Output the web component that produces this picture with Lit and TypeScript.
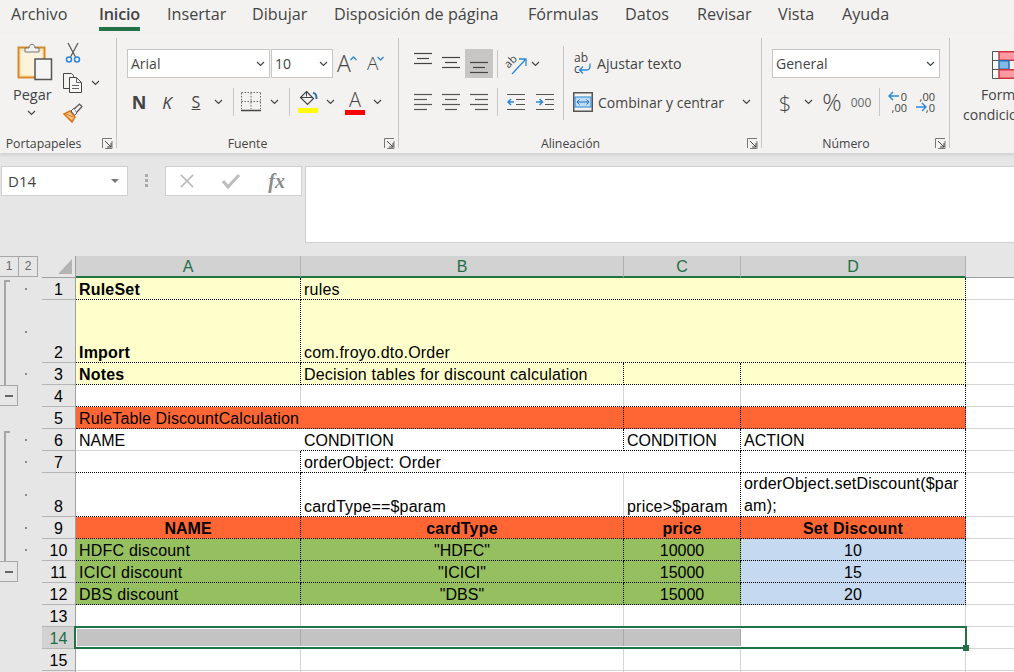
import { LitElement, html, css, svg } from 'lit';
import { customElement } from 'lit/decorators.js';

type Cell = { col: number; span?: number; text?: unknown; cls?: string };

const chev = html`<svg class="chev" width="9" height="6" viewBox="0 0 9 6"><path d="M1 1l3.5 3.5L8 1" fill="none" stroke="#444" stroke-width="1.2"/></svg>`;

const launcher = html`<svg class="launcher" width="11" height="11" viewBox="0 0 11 11"><path d="M.5 10V.5H10M10 3v7.5H3" fill="none" stroke="#777"/><path d="M3 3l6 6M9 5v4H5" fill="none" stroke="#444"/></svg>`;

const clipboard = html`<svg width="36" height="38" viewBox="0 0 36 38">
  <rect x="1.5" y="4.5" width="26" height="30" fill="#fbe3b2" stroke="#d68a2e" stroke-width="2"/>
  <rect x="4" y="8" width="21" height="24" fill="#fdf3dc"/>
  <path d="M8 9V5h4c0-5 6-5 6 0h4v4z" fill="#f3f2f1" stroke="#777"/>
  <rect x="18" y="16" width="16.500" height="20.500" fill="#f5f5f5" stroke="#555" stroke-width="1.500"/>
</svg>`;

const scissors = html`<svg width="20" height="20" viewBox="0 0 20 20">
  <path d="M5 0l7.500 14M15 0L7.500 14" fill="none" stroke="#555" stroke-width="1.200"/>
  <circle cx="6" cy="16.500" r="2.500" fill="none" stroke="#2b88d8" stroke-width="1.500"/>
  <circle cx="14" cy="16.500" r="2.500" fill="none" stroke="#2b88d8" stroke-width="1.500"/>
</svg>`;

const copy = html`<svg width="20" height="20" viewBox="0 0 20 20">
  <path d="M6 15.500H.5V.5h8l2 2v2" fill="#f3f2f1" stroke="#444"/>
  <path d="M6.500 4.500h7l5 5v10h-12z" fill="#f8f8f8" stroke="#444"/>
  <path d="M13.500 4.500v5h5M9 12.500h7M9 15.500h7" fill="none" stroke="#666"/>
</svg>`;

const brush = html`<svg width="20" height="20" viewBox="0 0 20 20">
  <path d="M1 11l6-3 5 6-3 5z" fill="#f8c67e" stroke="#d9791f" stroke-width="1.500"/>
  <path d="M4 14l5 4M3 11l7 3" stroke="#d9791f" fill="none"/>
  <path d="M8 8l3-3 3 5-2.500 2.500z" fill="#f3f2f1" stroke="#555"/>
  <path d="M11 6l5.500-5 2.500 2.500L14 9" fill="#f3f2f1" stroke="#555" stroke-width="1.200"/>
</svg>`;

const caret = (up: boolean) => html`<svg class="caret" width="7" height="5" viewBox="0 0 7 5"><path d=${up ? 'M.5 4l3-3 3 3' : 'M.5 1l3 3 3-3'} fill="none" stroke="#2b88d8" stroke-width="1.300"/></svg>`;

const borders = html`<svg width="20" height="22" viewBox="0 0 20 22">
  <path d="M.5 2v16M19.500 2v16M.5 1.500h19M.5 10.500h19M10 2v16" fill="none" stroke="#666" stroke-dasharray="1.500 1.500"/>
  <path d="M0 19.500h20" stroke="#444" stroke-width="1.500"/>
</svg>`;

const bucket = html`<svg width="20" height="24" viewBox="0 0 20 24">
  <path d="M8.500 1.500l7 7-6 6-7-7z" fill="#f3f2f1" stroke="#444" stroke-width="1.200"/>
  <path d="M2.500 7.500h12" stroke="#444"/>
  <path d="M8.500 1.500v5" stroke="#444"/>
  <path d="M15 3c3 0 3.500 2 3.500 6" fill="none" stroke="#2b6cb0" stroke-width="2"/>
  <rect y="18" width="20" height="5" fill="#ffff00"/>
</svg>`;

const lines = (ys: number[], insets: [number, number][], h: number, color = '#444') => html`<svg width="18" height=${h} viewBox="0 0 18 ${h}">
  ${ys.map((y, i) => svg`<path d="M${insets[i][0]} ${y}.5H${insets[i][1]}" stroke=${color} stroke-width="1.200"/>`)}
</svg>`;

const v3: [number, number][] = [[0, 18], [3, 15], [0, 18]];
const alignTop = lines([4, 9, 14], v3, 29);
const alignMid = lines([8, 13, 18], v3, 29);
const alignBot = lines([13, 18, 23], v3, 29);
const ys4 = [6, 11, 16, 21];
const alignL = lines(ys4, [[0, 18], [0, 13], [0, 18], [0, 13]], 28, '#555');
const alignC = lines(ys4, [[0, 18], [3, 15], [0, 18], [3, 15]], 28, '#555');
const alignR = lines(ys4, [[0, 18], [5, 18], [0, 18], [5, 18]], 28, '#555');

const indentOut = html`<svg width="18" height="28" viewBox="0 0 18 28">
  <path d="M0 6.500h18M9 11.500h9M9 16.500h9M0 21.500h18" stroke="#555" stroke-width="1.200"/>
  <path d="M7 14H1M4 11l-3 3 3 3" fill="none" stroke="#2b88d8" stroke-width="1.500"/>
</svg>`;
const indentIn = html`<svg width="18" height="28" viewBox="0 0 18 28">
  <path d="M0 6.500h18M9 11.500h9M9 16.500h9M0 21.500h18" stroke="#555" stroke-width="1.200"/>
  <path d="M0 14h6M3.500 11l3 3-3 3" fill="none" stroke="#2b88d8" stroke-width="1.500"/>
</svg>`;

const orient = html`<svg width="22" height="24" viewBox="0 0 22 24">
  <text x="0" y="14" font-family="Open Sans" font-size="11" fill="#444" transform="rotate(-45 5 11)">ab</text>
  <path d="M7 22L20 8M14 7h7v7" fill="none" stroke="#2b88d8" stroke-width="1.300"/>
</svg>`;

const wrapIcon = html`<svg width="18" height="22" viewBox="0 0 18 22">
  <text x="1" y="9" font-family="Open Sans" font-size="12" fill="#444">ab</text>
  <text x="1" y="20" font-family="Open Sans" font-size="12" fill="#444">c</text>
  <path d="M17 10.500v3c0 3-2 3.500-4 3.500H7M10 13.500L6.500 17l3.500 3.500" fill="none" stroke="#2b88d8" stroke-width="1.300"/>
</svg>`;

const mergeIcon = html`<svg width="20" height="20" viewBox="0 0 20 20">
  <rect x=".75" y=".75" width="18.500" height="18.500" fill="#f3f2f1" stroke="#555" stroke-width="1.500"/>
  <rect x="2" y="5" width="16" height="10" fill="#bcdcf5" stroke="#2b88d8"/>
  <path d="M4 10h12M6.500 7.500L4 10l2.500 2.500M13.500 7.500L16 10l-2.500 2.500" fill="none" stroke="#2b6cb0"/>
</svg>`;

const decIcon = (more: boolean) => html`<svg width="20" height="24" viewBox="0 0 20 24">
  ${more
    ? svg`<text x="20" y="11" text-anchor="end" class="dectxt">0</text><text x="20" y="22" text-anchor="end" class="dectxt">,00</text>
          <path d="M12 6H2M6 2L2 6l4 4" fill="none" stroke="#2b88d8" stroke-width="1.400"/>`
    : svg`<text x="20" y="11" text-anchor="end" class="dectxt">,00</text><text x="20" y="22" text-anchor="end" class="dectxt">,0</text>
          <path d="M1 17h10M7 13l4 4-4 4" fill="none" stroke="#2b88d8" stroke-width="1.400"/>`}
</svg>`;

const condIcon = html`<svg width="26" height="28" viewBox="0 0 26 28">
  <path d="M.5.5h7v27h-7zM.5 9.500h7M.5 18.500h7" fill="#fff" stroke="#555"/>
  <rect x="7" y=".75" width="19" height="8.500" fill="#ff9aa2" stroke="#d13438" stroke-width="1.500"/>
  <rect x="7" y="9.750" width="10" height="8.500" fill="#83b9e8" stroke="#2b6cb0" stroke-width="1.500"/>
  <rect x="7" y="18.750" width="19" height="8.500" fill="#ff9aa2" stroke="#d13438" stroke-width="1.500"/>
</svg>`;

const tabs = ['Archivo', 'Inicio', 'Insertar', 'Dibujar', 'Disposición de página', 'Fórmulas', 'Datos', 'Revisar', 'Vista', 'Ayuda'];

const Y = 'yellow dr db';
const O = 'orange dr db';
const OH = 'orange dr db bold center';
const G = 'green dr db';
const GC = 'green dr db center';
const BC = 'blue dr db center';

const data: Cell[][] = [
  [{ col: 0, text: 'RuleSet', cls: `${Y} bold` }, { col: 1, span: 3, text: 'rules', cls: Y }],
  [{ col: 0, text: 'Import', cls: `${Y} bold` }, { col: 1, span: 3, text: 'com.froyo.dto.Order', cls: Y }],
  [{ col: 0, text: 'Notes', cls: `${Y} bold` }, { col: 1, text: 'Decision tables for discount calculation', cls: Y }, { col: 2, cls: Y }, { col: 3, cls: Y }],
  [{ col: 0, cls: 'db' }, { col: 1, cls: 'db' }, { col: 2, cls: 'db' }, { col: 3, cls: 'dr db' }],
  [{ col: 0, span: 2, text: 'RuleTable DiscountCalculation', cls: `${O} mid` }, { col: 2, cls: O }, { col: 3, cls: O }],
  [{ col: 0, text: 'NAME', cls: 'nr caps' }, { col: 1, text: 'CONDITION', cls: 'dr db caps' }, { col: 2, text: 'CONDITION', cls: 'dr db caps' }, { col: 3, text: 'ACTION', cls: 'dr db caps' }],
  [{ col: 0, cls: 'dr db' }, { col: 1, span: 2, text: 'orderObject: Order', cls: 'dr db' }, { col: 3, cls: 'dr db' }],
  [
    { col: 0, cls: 'dr db' },
    { col: 1, text: 'cardType==$param', cls: 'db' },
    { col: 2, text: 'price>$param', cls: 'dr db' },
    { col: 3, text: html`<span>orderObject.setDiscount($par<br />am);</span>`, cls: 'dr db wrap' },
  ],
  [{ col: 0, text: 'NAME', cls: `${OH} caps` }, { col: 1, text: 'cardType', cls: OH }, { col: 2, text: 'price', cls: OH }, { col: 3, text: 'Set Discount', cls: OH }],
  [{ col: 0, text: 'HDFC discount', cls: G }, { col: 1, text: '"HDFC"', cls: `${GC} caps` }, { col: 2, text: '10000', cls: `${GC} caps` }, { col: 3, text: '10', cls: `${BC} caps` }],
  [{ col: 0, text: 'ICICI discount', cls: G }, { col: 1, text: '"ICICI"', cls: `${GC} caps` }, { col: 2, text: '15000', cls: `${GC} caps` }, { col: 3, text: '15', cls: `${BC} caps` }],
  [{ col: 0, text: 'DBS discount', cls: G }, { col: 1, text: '"DBS"', cls: `${GC} caps` }, { col: 2, text: '15000', cls: `${GC} caps` }, { col: 3, text: '20', cls: `${BC} caps` }],
  [{ col: 0 }, { col: 1 }, { col: 2 }, { col: 3 }],
  [{ col: 0, cls: 'sel' }, { col: 1, cls: 'sel' }, { col: 2, cls: 'sel' }, { col: 3 }],
  [{ col: 0 }, { col: 1 }, { col: 2 }, { col: 3 }],
  [{ col: 0 }, { col: 1 }, { col: 2 }, { col: 3 }],
];

const dotted = [1, 2, 3, 6, 7, 8, 9, 10];

@customElement('app-root')
export class AppRoot extends LitElement {
  static styles = css`
    :host {
      display: block;
      width: 1014px;
      height: 672px;
      overflow: hidden;
      background: #e6e6e6;
      font-family: 'Open Sans', sans-serif;
      color: #444;
    }
    svg { display: block; flex: none; overflow: visible; }
    .dectxt { font: 11px 'Open Sans', sans-serif; fill: #444; }

    .tabs {
      display: grid;
      grid-template-columns: 88px 68px 85px 82px 194px 97px 72px 81px 64px 100px;
      height: 33px;
      padding-left: 11px;
      box-sizing: border-box;
      background: #f3f2f1;
      font-size: 16.200px;
    }
    .tab { height: 27px; line-height: 29px; white-space: nowrap; }
    .tab.on span { display: inline-block; height: 27px; border-bottom: 4px solid #217346; font-weight: 600; letter-spacing: -.2px; }

    .ribbon {
      display: flex;
      height: 120px;
      background: #f3f2f1;
      box-shadow: 0 2px 3px #cfcfcf;
      position: relative;
      padding: 5px 0;
      box-sizing: border-box;
      font-size: 14px;
    }
    .group {
      display: flex;
      flex-direction: column;
      position: relative;
      box-sizing: border-box;
      height: 110px;
      border-right: 1px solid #c8c6c4;
      flex: none;
    }
    .g1 { width: 117px; }
    .g2 { width: 282px; padding: 11px 0 0 9px; }
    .g3 { width: 363px; padding: 11px 0 0 10px; }
    .g4 { width: 188px; padding: 11px 0 0 10px; }
    .g5 { border: 0; width: 120px; padding: 9px 0 0 13px; line-height: 20px; }
    .label {
      margin-top: auto;
      margin-bottom: -6px;
      padding-right: 29px;
      height: 20px;
      line-height: 20px;
      font-size: 12.300px;
      text-align: center;
    }
    .launcher { position: absolute; right: 3px; bottom: -1px; }

    .paste-body { display: flex; padding: 5px 0 0 13px; }
    .paste { display: flex; flex-direction: column; width: 47px; font-size: 14.500px; }
    .paste svg:first-child { margin-left: 4px; }
    .paste span { margin-top: 4px; line-height: 20px; }
    .paste .chev { margin: 5px 0 0 14px; }
    .clip-tools { display: flex; flex-direction: column; gap: 10px; margin-left: 3px; }
    .clip-tools div { display: flex; align-items: center; gap: 8px; height: 20px; }

    .sel-box {
      display: flex;
      align-items: center;
      justify-content: space-between;
      height: 29px;
      box-sizing: border-box;
      padding: 0 4px 0 3px;
      background: #fff;
      border: 1px solid #c8c6c4;
      font-size: 14px;
    }
    .r1 { display: flex; align-items: center; height: 29px; }
    .font-name { width: 143px; margin-left: 1px; }
    .font-size { width: 62px; margin-left: 1px; }
    .grow { display: flex; align-items: flex-start; width: 30px; font-size: 23px; font-weight: 300; line-height: 29px; margin-left: 4px; }
    .grow.small { font-size: 19px; margin-left: 0; }
    .caret { margin-top: 7px; margin-left: -1px; }

    .ir {
      display: grid;
      align-items: center;
      justify-items: center;
      height: 28px;
      margin-top: 10px;
    }
    .i1 { margin-top: 0; height: 29px; }
    .font2 { grid-template-columns: 28px 28px 30px 14px 16px 20px 26px 4px 34px 10px 40px 4px; margin-left: -1px; }
    .n { font: 700 18px 'Open Sans', sans-serif; }
    .k { font: italic 400 17px 'Open Sans', sans-serif; }
    .s { font-size: 16px; text-decoration: underline; }
    .vs { width: 1px; height: 28px; background: #c8c6c4; }
    .acolor { display: flex; flex-direction: column; align-items: center; width: 20px; font-size: 20px; font-weight: 300; line-height: 20px; }
    .acolor i { display: block; width: 20px; height: 5px; background: #ff0000; }

    .align-body { display: flex; }
    .align-left { width: 154px; }
    .al1, .al2 { grid-template-columns: 28px 28px 28px 8px 30px 8px; }
    .al2 { grid-template-columns: 28px 28px 28px 8px 30px 28px; }
    .picked { display: flex; justify-content: center; width: 28px; height: 29px; background: #c8c6c4; }
    .big-sep { width: 1px; height: 74px; margin-top: -3px; background: #c8c6c4; }
    .align-right { padding-left: 9px; }
    .aj { display: flex; align-items: center; gap: 6px; height: 29px; font-size: 14.200px; }
    .aj + .aj { height: 28px; margin-top: 10px; gap: 5px; font-size: 14px; }
    .aj .chev { margin-left: 13px; }

    .num-sel { width: 168px; }
    .num2 { grid-template-columns: 26px 20px 28px 30px 6px 30px 26px; }
    .dollar { font-size: 22px; font-weight: 300; line-height: 28px; }
    .pct { font-size: 24px; font-weight: 300; line-height: 28px; }
    .mil { font-size: 12px; color: #666; }

    .g5 svg { margin: 4px 0 6px 29px; }
    .g5 div { white-space: nowrap; font-size: 14px; }
    .g5 .first { padding-left: 18px; }

    .formula {
      display: flex;
      height: 103px;
      box-sizing: border-box;
      padding: 13px 0 0 1px;
      background: #e6e6e6;
    }
    .namebox, .fbtns, .finput { box-sizing: border-box; background: #fff; border: 1px solid #d0d0d0; flex: none; }
    .namebox {
      display: flex;
      align-items: center;
      justify-content: space-between;
      width: 127px;
      height: 30px;
      padding: 0 8px 0 6px;
      font-size: 15px;
    }
    .tri { width: 0; height: 0; border: 4px solid transparent; border-top: 4px solid #777; border-bottom: 0; }
    .grip { display: flex; flex: none; flex-direction: column; gap: 2px; width: 37px; align-items: center; padding-top: 8px; box-sizing: border-box; }
    .grip i { display: block; width: 3px; height: 3px; background: #aaa; }
    .fbtns { display: flex; align-items: center; justify-content: space-around; width: 137px; height: 30px; padding: 0 2px 0 0; }
    .fx { font: italic 700 20px 'Liberation Serif', serif; color: #8c8c8c; }
    .finput { width: 720px; height: 77px; margin-left: 3px; }

    .sheet {
      display: grid;
      grid-template-columns: 18px 24px 34px 225px 323px 117px 225px 60px;
      grid-template-rows: 22px 22px 63px 22px 22px 22px 22px 22px 44px 22px 22px 22px 22px 22px 22px 22px 22px;
      background: #fff;
      font: 16px 'Liberation Sans', Arial, sans-serif;
      color: #000;
    }
    .gut { background: #e6e6e6; grid-column: 1 / 3; }
    .outline-btns { display: flex; grid-column: 1 / 3; grid-row: 1; background: #e6e6e6; }
    .outline-btns span {
      box-sizing: border-box;
      width: 19px;
      height: 21px;
      border: 1px solid #a6a6a6;
      border-left-width: 0;
      text-align: center;
      font-size: 12px;
      line-height: 19px;
      color: #666;
    }
    .outline-btns span + span { width: 20px; border-left-width: 1px; margin-left: -1px; }
    .corner { grid-column: 3; grid-row: 1; background: #e6e6e6; border-right: 1px solid #a0a0a0; border-bottom: 1px solid #a0a0a0; display: flex; justify-content: flex-end; box-sizing: border-box; padding: 3px 3px 0 0; }
    .colh {
      box-sizing: border-box;
      background: #d2d2d2;
      border-right: 1px solid #b0b0b0;
      border-bottom: 2px solid #217346;
      color: #1f6e43;
      text-align: center;
      line-height: 21px;
      font-size: 16px;
    }
    .colh-rest { background: #e6e6e6; border-bottom: 1px solid #a0a0a0; box-sizing: border-box; }
    .rowh {
      box-sizing: border-box;
      grid-column: 3;
      background: #e6e6e6;
      border-right: 1px solid #a0a0a0;
      border-bottom: 1px solid #b5b5b5;
      display: flex;
      align-items: flex-end;
      justify-content: center;
      line-height: 19px;
    }
    .rowh.cur { background: #d2d2d2; color: #1f6e43; }
    .dot { display: flex; align-items: center; grid-column: 2; padding-left: 7px; box-sizing: border-box; pointer-events: none; }
    .dot i { display: block; width: 2px; height: 2px; background: #8a8a8a; }
    .bar {
      grid-column: 1;
      box-sizing: border-box;
      margin: 2px 0 0 4px;
      width: 6px;
      border-left: 2px solid #a6a6a6;
      border-top: 2px solid #a6a6a6;
    }
    .minus {
      grid-column: 1;
      box-sizing: border-box;
      width: 18px;
      height: 21px;
      background: #e6e6e6;
      border: 1px solid #a6a6a6;
      border-left: 0;
      display: flex;
      align-items: center;
      justify-content: center;
    }
    .minus i { display: block; width: 8px; height: 2px; background: #666; }

    .cell {
      box-sizing: border-box;
      display: flex;
      align-items: flex-end;
      padding-left: 3px;
      white-space: nowrap;
      line-height: 19px;
      letter-spacing: .2px;
      border-right: 1px solid #d4d4d4;
      border-bottom: 1px solid #d4d4d4;
      background: #fff;
    }
    .caps { letter-spacing: 0; }
    .mid { letter-spacing: .1px; }
    .dr { border-right: 1px dotted #000; }
    .db { border-bottom: 1px dotted #000; }
    .nr { border-right-color: transparent; }
    .bold { font-weight: 700; }
    .center { justify-content: center; padding-left: 0; }
    .wrap { line-height: 22px; align-items: flex-start; }
    .yellow { background: #ffffcc; }
    .orange { background: #ff6633; }
    .green { background: #96bf5f; }
    .blue { background: #c5d9f1; }
    .sel { background: #c3c3c3; border-right-color: #a8a8a8; border-bottom-color: #c3c3c3; }

    .selection {
      grid-column: 4 / 8;
      grid-row: 15;
      box-sizing: border-box;
      position: relative;
      margin: -1px -1px 0 -2px;
      border: 2px solid #217346;
      box-shadow: inset 0 0 0 1px #fff;
      pointer-events: none;
    }
    .handle {
      position: absolute;
      right: -4px;
      bottom: -4px;
      width: 6px;
      height: 6px;
      background: #217346;
    }
  `;

  renderCell(row: number, c: Cell) {
    const span = c.span ?? 1;
    return html`<div class="cell ${c.cls ?? ''}" style="grid-area: ${row + 1} / ${c.col + 4} / ${row + 2} / ${c.col + 4 + span}">${c.text ?? ''}</div>`;
  }

  renderSheet() {
    return html`
      <div class="sheet">
        <div class="gut" style="grid-row: 2 / 18"></div>
        <div class="outline-btns"><span>1</span><span>2</span></div>
        <div class="corner"><svg width="14" height="15" viewBox="0 0 14 15"><path d="M14 0v15H0z" fill="#b4b4b4"/></svg></div>
        ${['A', 'B', 'C', 'D'].map((l) => html`<div class="colh">${l}</div>`)}
        <div class="colh-rest"></div>

        <div class="bar" style="grid-row: 2 / 5"></div>
        <div class="minus" style="grid-row: 5"><i></i></div>
        <div class="bar" style="grid-row: 7 / 12"></div>
        <div class="minus" style="grid-row: 12"><i></i></div>
        ${dotted.map((n) => html`<div class="dot" style="grid-row: ${n + 1}"><i></i></div>`)}

        ${data.map((cells, i) => {
          const row = i + 1;
          return html`
            <div class="rowh ${row === 14 ? 'cur' : ''}" style="grid-row: ${row + 1}">${row}</div>
            ${cells.map((c) => this.renderCell(row, c))}
            ${this.renderCell(row, { col: 4, cls: 'nr' })}
          `;
        })}

        <div class="selection"><div class="handle"></div></div>
      </div>
    `;
  }

  render() {
    return html`
      <div class="tabs">
        ${tabs.map((t) => html`<div class="tab ${t === 'Inicio' ? 'on' : ''}"><span>${t}</span></div>`)}
      </div>

      <div class="ribbon">
        <div class="group g1">
          <div class="paste-body">
            <div class="paste">${clipboard}<span>Pegar</span>${chev}</div>
            <div class="clip-tools">
              <div>${scissors}</div>
              <div>${copy}${chev}</div>
              <div>${brush}</div>
            </div>
          </div>
          <div class="label">Portapapeles</div>
          ${launcher}
        </div>

        <div class="group g2">
          <div class="r1">
            <div class="sel-box font-name">Arial ${chev}</div>
            <div class="sel-box font-size">10 ${chev}</div>
            <div class="grow">A${caret(true)}</div>
            <div class="grow small">A${caret(false)}</div>
          </div>
          <div class="ir font2">
            <span class="n">N</span>
            <span class="k">K</span>
            <span class="s">S</span>
            ${chev}
            <div class="vs"></div>
            ${borders}
            ${chev}
            <div class="vs"></div>
            ${bucket}
            ${chev}
            <div class="acolor">A<i></i></div>
            ${chev}
          </div>
          <div class="label">Fuente</div>
          ${launcher}
        </div>

        <div class="group g3">
          <div class="align-body">
            <div class="align-left">
              <div class="ir i1 al1">
                ${alignTop}
                ${alignMid}
                <div class="picked">${alignBot}</div>
                <div class="vs"></div>
                ${orient}
                ${chev}
              </div>
              <div class="ir al2">
                ${alignL}
                ${alignC}
                ${alignR}
                <div class="vs"></div>
                ${indentOut}
                ${indentIn}
              </div>
            </div>
            <div class="big-sep"></div>
            <div class="align-right">
              <div class="aj">${wrapIcon}<span>Ajustar texto</span></div>
              <div class="aj">${mergeIcon}<span>Combinar y centrar</span>${chev}</div>
            </div>
          </div>
          <div class="label">Alineación</div>
          ${launcher}
        </div>

        <div class="group g4">
          <div class="sel-box num-sel">General ${chev}</div>
          <div class="ir num2">
            <span class="dollar">$</span>
            ${chev}
            <span class="pct">%</span>
            <span class="mil">000</span>
            <div class="vs"></div>
            ${decIcon(true)}
            ${decIcon(false)}
          </div>
          <div class="label">Número</div>
          ${launcher}
        </div>

        <div class="group g5">
          ${condIcon}
          <div class="first">Formato</div>
          <div>condicional</div>
        </div>
      </div>

      <div class="formula">
        <div class="namebox">D14 <span class="tri"></span></div>
        <div class="grip"><i></i><i></i><i></i></div>
        <div class="fbtns">
          <svg width="14" height="14" viewBox="0 0 16 16"><path d="M1 1l14 14M15 1L1 15" stroke="#bdbdbd" stroke-width="2"/></svg>
          <svg width="18" height="16" viewBox="0 0 18 16"><path d="M1 8l5 6L17 2" fill="none" stroke="#bdbdbd" stroke-width="3"/></svg>
          <span class="fx">fx</span>
        </div>
        <div class="finput"></div>
      </div>

      ${this.renderSheet()}
    `;
  }
}
